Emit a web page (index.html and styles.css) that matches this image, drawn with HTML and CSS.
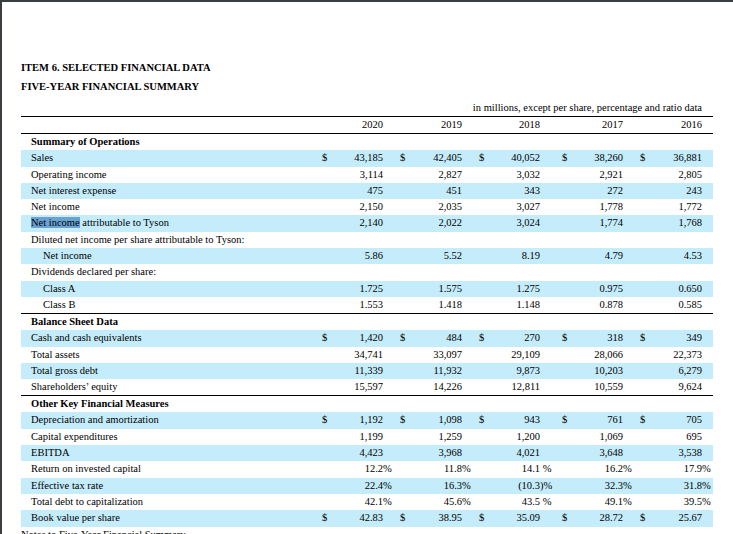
FILE: index.html
```html
<!DOCTYPE html>
<html lang="en">
<head>
<meta charset="utf-8">
<title>Item 6. Selected Financial Data</title>
<link rel="stylesheet" href="styles.css">
</head>
<body>
<div class="page">
  <div class="title">ITEM 6. SELECTED FINANCIAL DATA</div>
  <div class="title subtitle">FIVE-YEAR FINANCIAL SUMMARY</div>
  <div class="units">in millions, except per share, percentage and ratio data</div>
  <table class="fin">
    <colgroup>
      <col class="c-label"><col class="c-dol"><col class="c-v1"><col class="c-dol"><col class="c-v2"><col class="c-dol"><col class="c-v3"><col class="c-dol"><col class="c-v4"><col class="c-dol"><col class="c-v5">
    </colgroup>
    <thead>
      <tr><th></th><th></th><th>2020</th><th></th><th>2019</th><th></th><th>2018</th><th></th><th>2017</th><th></th><th>2016</th></tr>
    </thead>
    <tbody>
      <tr class="head"><td>Summary of Operations</td><td></td><td></td><td></td><td></td><td></td><td></td><td></td><td></td><td></td><td></td></tr>
      <tr class="hl"><td>Sales</td><td>$</td><td>43,185</td><td>$</td><td>42,405</td><td>$</td><td>40,052</td><td>$</td><td>38,260</td><td>$</td><td>36,881</td></tr>
      <tr><td>Operating income</td><td></td><td>3,114</td><td></td><td>2,827</td><td></td><td>3,032</td><td></td><td>2,921</td><td></td><td>2,805</td></tr>
      <tr class="hl"><td>Net interest expense</td><td></td><td>475</td><td></td><td>451</td><td></td><td>343</td><td></td><td>272</td><td></td><td>243</td></tr>
      <tr><td>Net income</td><td></td><td>2,150</td><td></td><td>2,035</td><td></td><td>3,027</td><td></td><td>1,778</td><td></td><td>1,772</td></tr>
      <tr class="hl"><td><span class="sel">Net income</span> attributable to Tyson</td><td></td><td>2,140</td><td></td><td>2,022</td><td></td><td>3,024</td><td></td><td>1,774</td><td></td><td>1,768</td></tr>
      <tr><td>Diluted net income per share attributable to Tyson:</td><td></td><td></td><td></td><td></td><td></td><td></td><td></td><td></td><td></td><td></td></tr>
      <tr class="hl ind"><td>Net income</td><td></td><td>5.86</td><td></td><td>5.52</td><td></td><td>8.19</td><td></td><td>4.79</td><td></td><td>4.53</td></tr>
      <tr><td>Dividends declared per share:</td><td></td><td></td><td></td><td></td><td></td><td></td><td></td><td></td><td></td><td></td></tr>
      <tr class="hl ind"><td>Class A</td><td></td><td>1.725</td><td></td><td>1.575</td><td></td><td>1.275</td><td></td><td>0.975</td><td></td><td>0.650</td></tr>
      <tr class="ind"><td>Class B</td><td></td><td>1.553</td><td></td><td>1.418</td><td></td><td>1.148</td><td></td><td>0.878</td><td></td><td>0.585</td></tr>
      <tr class="head sect"><td>Balance Sheet Data</td><td></td><td></td><td></td><td></td><td></td><td></td><td></td><td></td><td></td><td></td></tr>
      <tr class="hl"><td>Cash and cash equivalents</td><td>$</td><td>1,420</td><td>$</td><td>484</td><td>$</td><td>270</td><td>$</td><td>318</td><td>$</td><td>349</td></tr>
      <tr><td>Total assets</td><td></td><td>34,741</td><td></td><td>33,097</td><td></td><td>29,109</td><td></td><td>28,066</td><td></td><td>22,373</td></tr>
      <tr class="hl"><td>Total gross debt</td><td></td><td>11,339</td><td></td><td>11,932</td><td></td><td>9,873</td><td></td><td>10,203</td><td></td><td>6,279</td></tr>
      <tr><td>Shareholders’ equity</td><td></td><td>15,597</td><td></td><td>14,226</td><td></td><td>12,811</td><td></td><td>10,559</td><td></td><td>9,624</td></tr>
      <tr class="head sect"><td>Other Key Financial Measures</td><td></td><td></td><td></td><td></td><td></td><td></td><td></td><td></td><td></td><td></td></tr>
      <tr class="hl"><td>Depreciation and amortization</td><td>$</td><td>1,192</td><td>$</td><td>1,098</td><td>$</td><td>943</td><td>$</td><td>761</td><td>$</td><td>705</td></tr>
      <tr><td>Capital expenditures</td><td></td><td>1,199</td><td></td><td>1,259</td><td></td><td>1,200</td><td></td><td>1,069</td><td></td><td>695</td></tr>
      <tr class="hl"><td>EBITDA</td><td></td><td>4,423</td><td></td><td>3,968</td><td></td><td>4,021</td><td></td><td>3,648</td><td></td><td>3,538</td></tr>
      <tr><td>Return on invested capital</td><td></td><td>12.2<span class="hang">%</span></td><td></td><td>11.8<span class="hang">%</span></td><td></td><td>14.1<span class="hang">&nbsp;%</span></td><td></td><td>16.2<span class="hang">%</span></td><td></td><td>17.9<span class="hang">%</span></td></tr>
      <tr class="hl"><td>Effective tax rate</td><td></td><td>22.4<span class="hang">%</span></td><td></td><td>16.3<span class="hang">%</span></td><td></td><td>(10.3<span class="hang">)%</span></td><td></td><td>32.3<span class="hang">%</span></td><td></td><td>31.8<span class="hang">%</span></td></tr>
      <tr><td>Total debt to capitalization</td><td></td><td>42.1<span class="hang">%</span></td><td></td><td>45.6<span class="hang">%</span></td><td></td><td>43.5<span class="hang">&nbsp;%</span></td><td></td><td>49.1<span class="hang">%</span></td><td></td><td>39.5<span class="hang">%</span></td></tr>
      <tr class="hl"><td>Book value per share</td><td>$</td><td>42.83</td><td>$</td><td>38.95</td><td>$</td><td>35.09</td><td>$</td><td>28.72</td><td>$</td><td>25.67</td></tr>
    </tbody>
  </table>
  <div class="notes">Notes to Five-Year Financial Summary</div>
</div>
</body>
</html>
```
FILE: styles.css
```css
html, body {
  margin: 0;
  padding: 0;
  background: #ffffff;
}

body {
  font-family: "Liberation Serif", "Times New Roman", serif;
  font-size: 10.5px;
  color: #000000;
}

.page {
  width: 733px;
  height: 534px;
  box-sizing: border-box;
  border-top: 2px solid #3a3d41;
  border-left: 2px solid #3a3d41;
  padding: 58px 0 0 19px;
  overflow: hidden;
}

.title {
  font-weight: bold;
  line-height: 16px;
}

.subtitle {
  margin-top: 3px;
}

.units {
  width: 692px;
  box-sizing: border-box;
  margin-top: 5px;
  padding-right: 11px;
  text-align: right;
  line-height: 16px;
}

.fin {
  width: 692px;
  table-layout: fixed;
  border-collapse: separate;
  border-spacing: 0;
}

.c-label { width: 301px; }
.c-dol { width: 14px; }
.c-v1 { width: 64px; }
.c-v2 { width: 65px; }
.c-v3 { width: 69px; }
.c-v4 { width: 64px; }
.c-v5 { width: 59px; }

.fin th,
.fin td {
  padding: 0;
  height: 16.3px;
  line-height: 16.3px;
  white-space: nowrap;
  font-weight: normal;
  box-sizing: border-box;
}

.fin th {
  height: 17px;
  line-height: 16px;
  border-top: 1px solid #000;
  border-bottom: 1px solid #000;
  text-align: right;
}

.fin td:nth-child(even) {
  text-align: left;
}

.fin td:nth-child(odd) {
  text-align: right;
}

.fin td:nth-child(3), .fin th:nth-child(3) { padding-right: 17px; }
.fin td:nth-child(5), .fin th:nth-child(5) { padding-right: 17px; }
.fin td:nth-child(7), .fin th:nth-child(7) { padding-right: 22px; }
.fin td:nth-child(9), .fin th:nth-child(9) { padding-right: 17px; }
.fin td:nth-child(11), .fin th:nth-child(11) { padding-right: 11px; }

.fin td.label,
.fin td:first-child {
  padding-left: 10px;
  text-align: left;
}

.fin .ind td:first-child {
  padding-left: 22px;
}

.fin .head td:first-child {
  font-weight: bold;
}

.fin .sect td {
  border-top: 1px solid #000;
  height: 17px;
  line-height: 16px;
}

.fin .hl td {
  background: #c5ecfb;
}

.sel {
  background: #6aa2d4;
}

.hang {
  display: inline-block;
  width: 0;
  white-space: nowrap;
  text-align: left;
}

.notes {
  line-height: 16px;
  margin-top: 0;
}
```
